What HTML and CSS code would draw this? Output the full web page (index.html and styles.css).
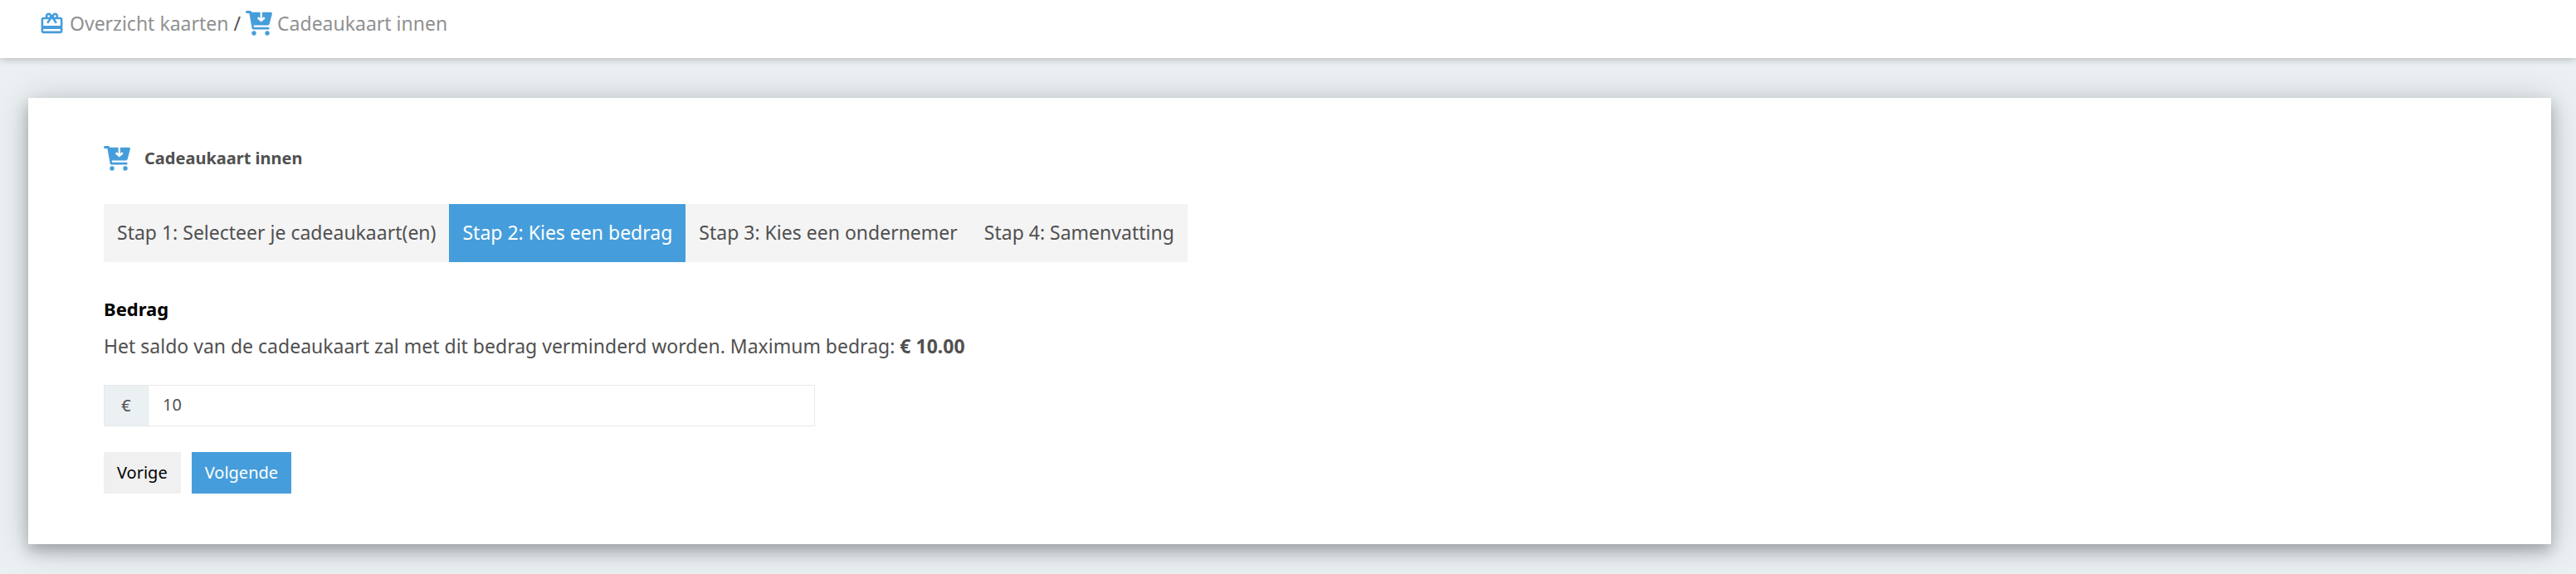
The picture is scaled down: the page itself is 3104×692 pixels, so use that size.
FILE: index.html
```html
<!DOCTYPE html>
<html lang="nl">
<head>
<meta charset="utf-8">
<title>Cadeaukaart innen</title>
<link rel="stylesheet" href="styles.css">
</head>
<body>
<svg class="defs" aria-hidden="true">
  <symbol id="cart" viewBox="0 0 32 30">
    <path fill="currentColor" fill-rule="evenodd" d="M1.2 0H5.6Q6.6 0 7 1.2L7.2 1.8H17.6V9L15.4 7.2L13.9 9.2L18.7 13.6L23.6 9.2L22 7.2L19.9 9V1.8H30.4Q32.4 2 31.8 4L28.8 15.6Q28.4 17.6 26.6 17.6H9.6L10 19.8H27.4Q28.6 20 28.6 21.200T27.4 22.600H9.2Q7.900 22.500 7.600 21L4.400 3H1.200Q0 2.800 0 1.500T1.200 0Z"/>
    <circle cx="10" cy="27" r="2.700" fill="currentColor"/>
    <circle cx="26" cy="27" r="2.700" fill="currentColor"/>
  </symbol>
  <symbol id="gift" viewBox="0 0 24 24">
    <path fill="currentColor" d="M20 6h-2.18c.11-.31.18-.65.18-1 0-1.66-1.34-3-3-3-1.05 0-1.96.54-2.5 1.35l-.5.67-.5-.68C10.96 2.54 10.05 2 9 2 7.34 2 6 3.34 6 5c0 .35.07.69.18 1H4c-1.11 0-1.99.89-1.99 2L2 19c0 1.11.89 2 2 2h16c1.11 0 2-.89 2-2V8c0-1.11-.89-2-2-2zm-5-2c.55 0 1 .45 1 1s-.45 1-1 1-1-.45-1-1 .45-1 1-1zM9 4c.55 0 1 .45 1 1s-.45 1-1 1-1-.45-1-1 .45-1 1-1zm11 15H4v-2h16v2zm0-5H4V8h5.08L7 10.83 8.62 12 11 8.76l1-1.36 1 1.36L15.38 12 17 10.83 14.92 8H20v6z"/>
  </symbol>
</svg>
<header class="topbar">
  <nav class="crumbs" aria-label="Kruimelpad">
    <a class="crumb" href="#"><svg class="gift"><use href="#gift"/></svg>Overzicht kaarten</a>
    <span>/</span>
    <a class="crumb" href="#"><svg class="cart"><use href="#cart"/></svg>Cadeaukaart innen</a>
  </nav>
</header>
<main class="card">
  <h1 class="title"><svg class="cart"><use href="#cart"/></svg>Cadeaukaart innen</h1>
  <ol class="steps">
    <li class="step">Stap 1: Selecteer je cadeaukaart(en)</li>
    <li class="step active" aria-current="step">Stap 2: Kies een bedrag</li>
    <li class="step">Stap 3: Kies een ondernemer</li>
    <li class="step">Stap 4: Samenvatting</li>
  </ol>
  <form class="form">
    <label class="label" for="amount">Bedrag</label>
    <p class="hint">Het saldo van de cadeaukaart zal met dit bedrag verminderd worden. Maximum bedrag: <strong>€ 10.00</strong></p>
    <div class="group">
      <span class="addon">€</span>
      <input class="input" id="amount" type="text" value="10">
    </div>
    <div class="actions">
      <button class="button" type="button">Vorige</button>
      <button class="button primary" type="button">Volgende</button>
    </div>
  </form>
</main>
</body>
</html>
```
FILE: styles.css
```css
* { box-sizing: border-box; }
body {
  margin: 0;
  min-height: 100vh;
  background: #ebf0f3;
  color: #505050;
  font: 23px/32px "Noto Sans", sans-serif;
}
.defs { display: none; }
.topbar {
  display: flex;
  height: 70px;
  padding: 11px 47px;
  background: #fff;
  box-shadow: 0 0 10px rgba(0, 0, 0, .3);
}
.crumbs { display: flex; gap: 6px; height: 34px; align-items: center; }
.crumb { display: flex; align-items: center; gap: 6px; color: #8f9191; text-decoration: none; }
.gift { width: 31px; height: 31px; color: #469ddb; }
.cart { width: 32px; height: 30px; color: #469ddb; flex: none; }
.card {
  margin: 48px 30px 36px 34px;
  padding: 55px 91px 61px;
  background: #fff;
  box-shadow: 0 8px 16px rgba(0, 0, 0, .24), 0 4px 40px rgba(0, 0, 0, .19);
}
.title { display: flex; align-items: center; gap: 17px; margin: 0 0 37px; font-size: 20px; line-height: 36px; }
.steps { display: flex; width: max-content; margin: 0 0 40px; padding: 0; list-style: none; background: #f4f4f4; }
.step { padding: 18px 16px 20px; }
.step.active { background: #469ddb; color: #fff; }
.label { display: block; color: #000; font-size: 22px; font-weight: 700; }
.hint { margin: 13px 0 31px; }
.group { display: flex; width: 857px; max-width: 100%; height: 50px; border: 1px solid #e8e8e8; }
.addon { display: grid; place-items: center; width: 53px; background: #ebf0f3; border-right: 1px solid #e8e8e8; font-size: 20px; }
.input { flex: 1; min-width: 0; padding: 0 17px 2px; border: 0; background: #fff; color: inherit; font: inherit; font-size: 20px; }
.actions { display: flex; gap: 13px; margin-top: 31px; }
.button { height: 50px; padding: 0 16px; border: 0; background: #f0f0f0; color: #000; font: inherit; font-size: 20px; }
.button.primary { background: #469ddb; color: #fff; }
```
